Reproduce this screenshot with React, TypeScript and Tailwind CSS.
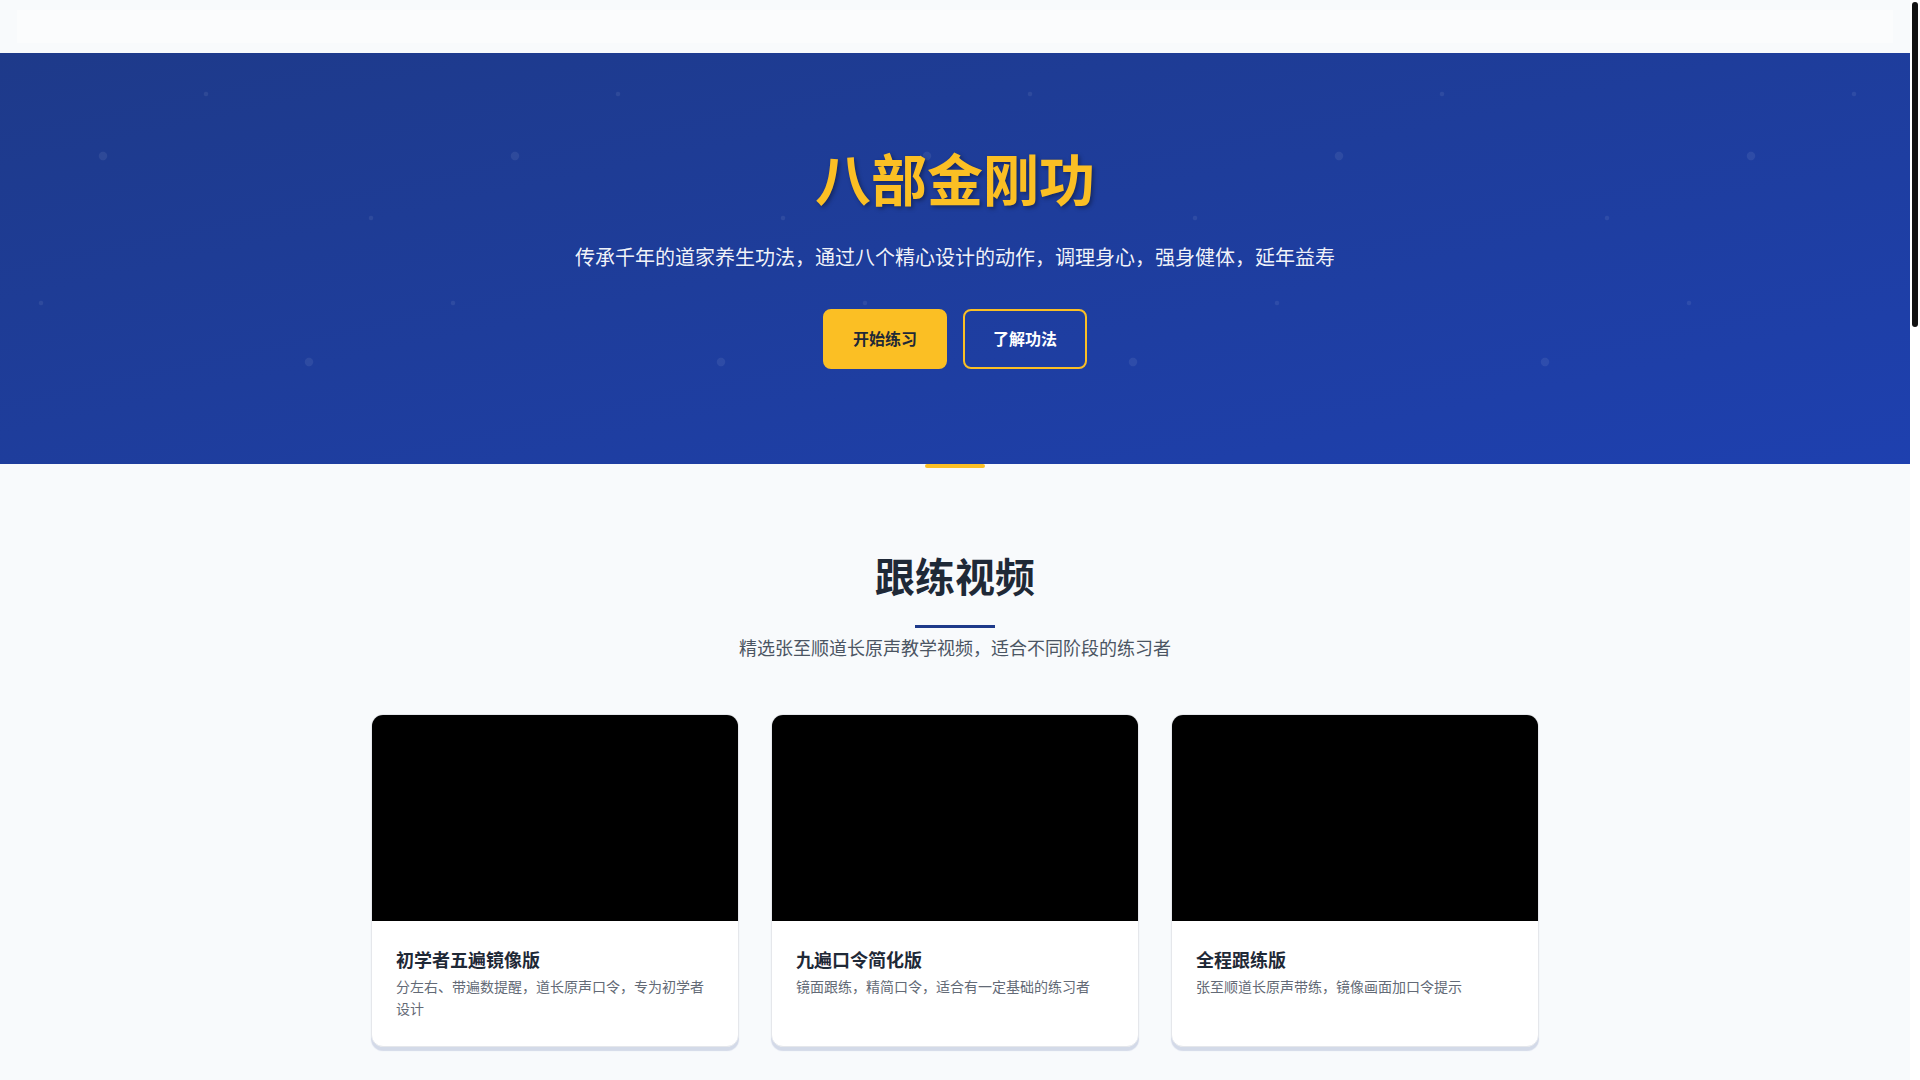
import React from "react";

const videos = [
  {
    title: "初学者五遍镜像版",
    desc: "分左右、带遍数提醒，道长原声口令，专为初学者设计",
  },
  {
    title: "九遍口令简化版",
    desc: "镜面跟练，精简口令，适合有一定基础的练习者",
  },
  {
    title: "全程跟练版",
    desc: "张至顺道长原声带练，镜像画面加口令提示",
  },
];

const moves = [
  "第一部 双手托天",
  "第二部 左右开弓",
  "第三部 调理脾胃",
  "第四部 五劳七伤",
  "第五部 摇头摆尾",
  "第六部 两手攀足",
  "第七部 攒拳怒目",
  "第八部 背后七颠",
];

function DotPattern() {
  return (
    <svg className="absolute inset-0 h-full w-full" aria-hidden="true">
      <defs>
        <pattern id="dots" width="412" height="412" patternUnits="userSpaceOnUse">
          <circle cx="103" cy="103" r="4.2" fill="#ffffff" fillOpacity="0.07" />
          <circle cx="309" cy="309" r="4.2" fill="#ffffff" fillOpacity="0.07" />
          <circle cx="206" cy="41" r="2.2" fill="#ffffff" fillOpacity="0.07" />
          <circle cx="371" cy="165" r="2.2" fill="#ffffff" fillOpacity="0.07" />
          <circle cx="41" cy="250" r="2.2" fill="#ffffff" fillOpacity="0.07" />
        </pattern>
      </defs>
      <rect width="100%" height="100%" fill="url(#dots)" />
    </svg>
  );
}

export default function App() {
  return (
    <div className="flex h-screen w-full bg-white font-['Noto_Sans_CJK_SC','Noto_Sans',sans-serif]">
      <div className="min-w-0 flex-1 overflow-y-scroll bg-[#f8fafc] [scrollbar-width:none] [&::-webkit-scrollbar]:hidden">
        <div className="flex min-h-[3590px] flex-col">
          {/* header */}
          <header className="h-[53px] bg-[#f8fafc] px-[17px] pt-[10px]">
            <div className="h-[33px] bg-white/40"></div>
          </header>

          {/* hero */}
          <section className="relative bg-linear-to-br from-[#1e3a8a] to-[#1e40af] pt-[96px] pb-[95px] text-center">
            <DotPattern />
            <div className="relative flex flex-col items-center">
              <h1 className="text-[56px] font-bold leading-none text-[#fbbf24] [text-shadow:2px_2px_4px_rgba(0,0,0,0.35)]">
                八部金刚功
              </h1>
              <p className="mt-[38px] text-[20px] leading-[28px] text-white/95">
                传承千年的道家养生功法，通过八个精心设计的动作，调理身心，强身健体，延年益寿
              </p>
              <div className="mt-[38px] flex gap-4">
                <button className="h-[60px] rounded-lg border-2 border-[#fbbf24] bg-[#fbbf24] px-7 pb-[2px] text-base font-bold text-[#1f2937]">
                  开始练习
                </button>
                <button className="h-[60px] rounded-lg border-2 border-[#fbbf24] bg-transparent px-7 pb-[2px] text-base font-bold text-white">
                  了解功法
                </button>
              </div>
            </div>
            <div className="absolute left-1/2 top-full h-1 w-[60px] -translate-x-1/2 rounded-full bg-[#fbbf24]"></div>
          </section>

          {/* videos */}
          <section className="pt-[87px] pb-20">
            <div className="mx-auto max-w-[1200px] px-4">
              <div className="flex flex-col items-center">
                <h2 className="text-[40px] font-bold leading-[48px] text-[#1f2937]">跟练视频</h2>
                <div className="mt-[26px] h-[3px] w-20 bg-[#1e3a8a]"></div>
                <p className="mt-[5px] text-lg leading-7 text-[#4b5563]">
                  精选张至顺道长原声教学视频，适合不同阶段的练习者
                </p>
              </div>
              <div className="mt-[53px] grid grid-cols-3 gap-8">
                {videos.map((v) => (
                  <div
                    key={v.title}
                    className="overflow-hidden rounded-xl border border-[#e5e7eb] bg-white shadow-[0_4px_1px_rgba(30,58,138,0.17)]"
                  >
                    <div className="aspect-video w-full bg-black"></div>
                    <div className="px-6 pt-6 pb-[27px]">
                      <h3 className="mb-[2px] text-lg font-bold leading-7 text-[#1f2937]">{v.title}</h3>
                      <p className="text-sm leading-[22px] text-[#636a76]">{v.desc}</p>
                    </div>
                  </div>
                ))}
              </div>
            </div>
          </section>

          {/* moves */}
          <section className="bg-white py-20">
            <div className="mx-auto max-w-[1200px] px-4">
              <div className="flex flex-col items-center">
                <h2 className="text-[40px] font-bold leading-[48px] text-[#1f2937]">八部功法</h2>
                <div className="mt-[26px] h-[3px] w-20 bg-[#1e3a8a]"></div>
                <p className="mt-1 text-lg leading-7 text-[#4b5563]">每一部动作都有其独特的养生功效</p>
              </div>
              <div className="mt-[55px] grid grid-cols-4 gap-6">
                {moves.map((m, i) => (
                  <div key={m} className="rounded-xl border border-[#e5e7eb] bg-[#f8fafc] p-6">
                    <div className="mb-4 flex h-12 w-12 items-center justify-center rounded-full bg-[#1e3a8a] text-lg font-bold text-[#fbbf24]">
                      {i + 1}
                    </div>
                    <h3 className="text-lg font-bold text-[#1f2937]">{m}</h3>
                    <p className="mt-2 text-sm leading-[22px] text-[#6b7280]">
                      动作舒缓，配合呼吸，循序渐进，持之以恒。
                    </p>
                  </div>
                ))}
              </div>
            </div>
          </section>

          {/* notes */}
          <section className="py-20">
            <div className="mx-auto max-w-[1200px] px-4">
              <div className="flex flex-col items-center">
                <h2 className="text-[40px] font-bold leading-[48px] text-[#1f2937]">练功须知</h2>
                <div className="mt-[26px] h-[3px] w-20 bg-[#1e3a8a]"></div>
              </div>
              <div className="mt-[55px] grid grid-cols-2 gap-8">
                {["练功时间", "练功环境", "注意事项", "循序渐进"].map((t) => (
                  <div key={t} className="rounded-xl bg-white p-8 shadow-[0_4px_1px_rgba(30,58,138,0.17)]">
                    <h3 className="text-xl font-bold text-[#1e3a8a]">{t}</h3>
                    <p className="mt-3 text-base leading-7 text-[#4b5563]">
                      保持心情平和，动作自然放松，量力而行，切勿勉强。
                    </p>
                  </div>
                ))}
              </div>
            </div>
          </section>

          <div className="flex-1"></div>

          <footer className="bg-[#1e3a8a] py-10 text-center text-sm text-white/80">
            © 八部金刚功 · 传承道家养生文化
          </footer>
        </div>
      </div>

      {/* scrollbar rail */}
      <div className="w-[10px] shrink-0 bg-white pt-[2px]">
        <div className="mx-auto h-[325px] w-[6px] rounded-full bg-[#111111]"></div>
      </div>
    </div>
  );
}
